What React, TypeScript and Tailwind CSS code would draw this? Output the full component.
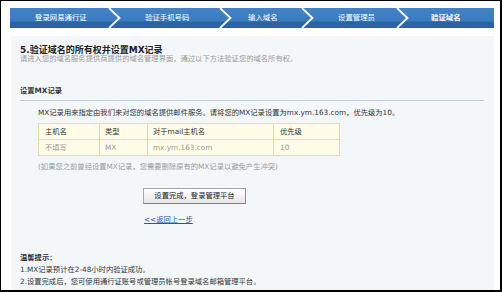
import React from 'react';

const STEPS = [
  { label: '登录网易通行证', w: 'w-[98px]', pl: 'pl-[25px]' },
  { label: '验证手机号码', w: 'w-[98px]', pl: 'pl-[24px]' },
  { label: '输入域名', w: 'w-[69px]', pl: 'pl-[16px]' },
  { label: '设置管理员', w: 'w-[82px]', pl: 'pl-[24px]' },
  { label: '验证域名', w: 'w-[85px]', pl: 'pl-[22px]', active: true },
];

const Chevron = () => (
  <svg width="13" height="20" viewBox="0 0 13 20" className="shrink-0">
    <polyline points="1,0 11.5,10 1,20" fill="none" stroke="#ffffff" strokeWidth="1.8" />
  </svg>
);

const StepBar = () => (
  <div className="flex h-[20px] w-[484px] bg-[linear-gradient(#4383c5_0%,#3a7bbf_65%,#2c63a6_70%,#2c63a6_100%)]">
    {STEPS.map((s, i) => (
      <React.Fragment key={s.label}>
        {i > 0 && <Chevron />}
        <div
          className={`${s.w} ${s.pl} flex items-center shrink-0 text-[7.4px] leading-[20px] text-white whitespace-nowrap ${
            s.active ? 'font-bold' : ''
          }`}
        >
          {s.label}
        </div>
      </React.Fragment>
    ))}
  </div>
);

export default function App() {
  return (
    <div className="w-[502px] h-[292px] box-border border-black border-l border-t border-r-2 border-b-2 bg-white pl-[9px] pt-[7px] pr-[6px] flex flex-col font-['DejaVu_Sans','Noto_Sans_CJK_SC',sans-serif] text-[7.3px] text-[#333]">
      <StepBar />

      <div className="mt-[8px] ml-px flex-1 bg-[#f3f7fa] flex flex-col">
        <div className="pl-[9px] pt-[10px] text-[9px] leading-[9px] font-bold text-[#222] whitespace-nowrap">
          5.验证域名的所有权并设置MX记录
        </div>
        <div className="pl-[9px] leading-[8px] text-[#9a9a9a] whitespace-nowrap">
          请进入您的域名服务提供商提供的域名管理界面，通过以下方法验证您的域名所有权。
        </div>

        <div className="ml-[9px] mr-[10px] mt-[23px] pb-[4px] border-b border-[#b9d0e3] leading-[10px] font-bold whitespace-nowrap">
          设置MX记录
        </div>

        <div className="pl-[27px] flex flex-col items-start">
          <div className="mt-[7px] leading-[10px] whitespace-nowrap">
            MX记录用来指定由我们来对您的域名提供邮件服务。请将您的MX记录设置为mx.ym.163.com，优先级为10。
          </div>

          <table className="mt-[5px] w-[301px] border-collapse bg-[#fffde6] table-fixed">
            <colgroup>
              <col className="w-[61px]" />
              <col className="w-[48px]" />
              <col className="w-[126px]" />
              <col className="w-[66px]" />
            </colgroup>
            <tbody>
              <tr className="h-[16px]">
                <td className="border border-[#e5dca6] pl-[6px] p-0 leading-[15px] text-[#333]">主机名</td>
                <td className="border border-[#e5dca6] pl-[5px] p-0 leading-[15px] text-[#333]">类型</td>
                <td className="border border-[#e5dca6] pl-[5px] p-0 leading-[15px] text-[#333] whitespace-nowrap">对于mail主机名</td>
                <td className="border border-[#e5dca6] pl-[6px] p-0 leading-[15px] text-[#333]">优先级</td>
              </tr>
              <tr className="h-[16px]">
                <td className="border border-[#e5dca6] pl-[6px] p-0 leading-[15px] text-[#999]">不填写</td>
                <td className="border border-[#e5dca6] pl-[5px] p-0 leading-[15px] text-[#999]">MX</td>
                <td className="border border-[#e5dca6] pl-[5px] p-0 leading-[15px] text-[#999]">mx.ym.163.com</td>
                <td className="border border-[#e5dca6] pl-[6px] p-0 leading-[15px] text-[#999]">10</td>
              </tr>
            </tbody>
          </table>

          <div className="mt-[6px] leading-[10px] text-[#9a9a9a] whitespace-nowrap">
            (如果您之前曾经设置MX记录，您需要删除原有的MX记录以避免产生冲突)
          </div>

          <button className="ml-[105px] mt-[16px] w-[103px] h-[16px] flex items-center justify-center border border-[#a5a5a5] border-b-[#7f7f7f] border-r-[#8a8a8a] bg-[linear-gradient(#ffffff,#e6e6e6)] text-[7.3px] leading-[14px] text-[#222] whitespace-nowrap">
            设置完成，登录管理平台
          </button>

          <a href="#" className="ml-[106px] mt-[11px] leading-[10px] text-[#2358a6] underline whitespace-nowrap">
            &lt;&lt;返回上一步
          </a>
        </div>

        <div className="pl-[9px] mt-[27px] leading-[12px] font-bold whitespace-nowrap">温馨提示：</div>
        <div className="pl-[9px] leading-[12px] whitespace-nowrap">1.MX记录预计在2-48小时内验证成功。</div>
        <div className="pl-[9px] leading-[12px] whitespace-nowrap">
          2.设置完成后，您可使用通行证账号或管理员帐号登录域名邮箱管理平台。
        </div>
      </div>
    </div>
  );
}
